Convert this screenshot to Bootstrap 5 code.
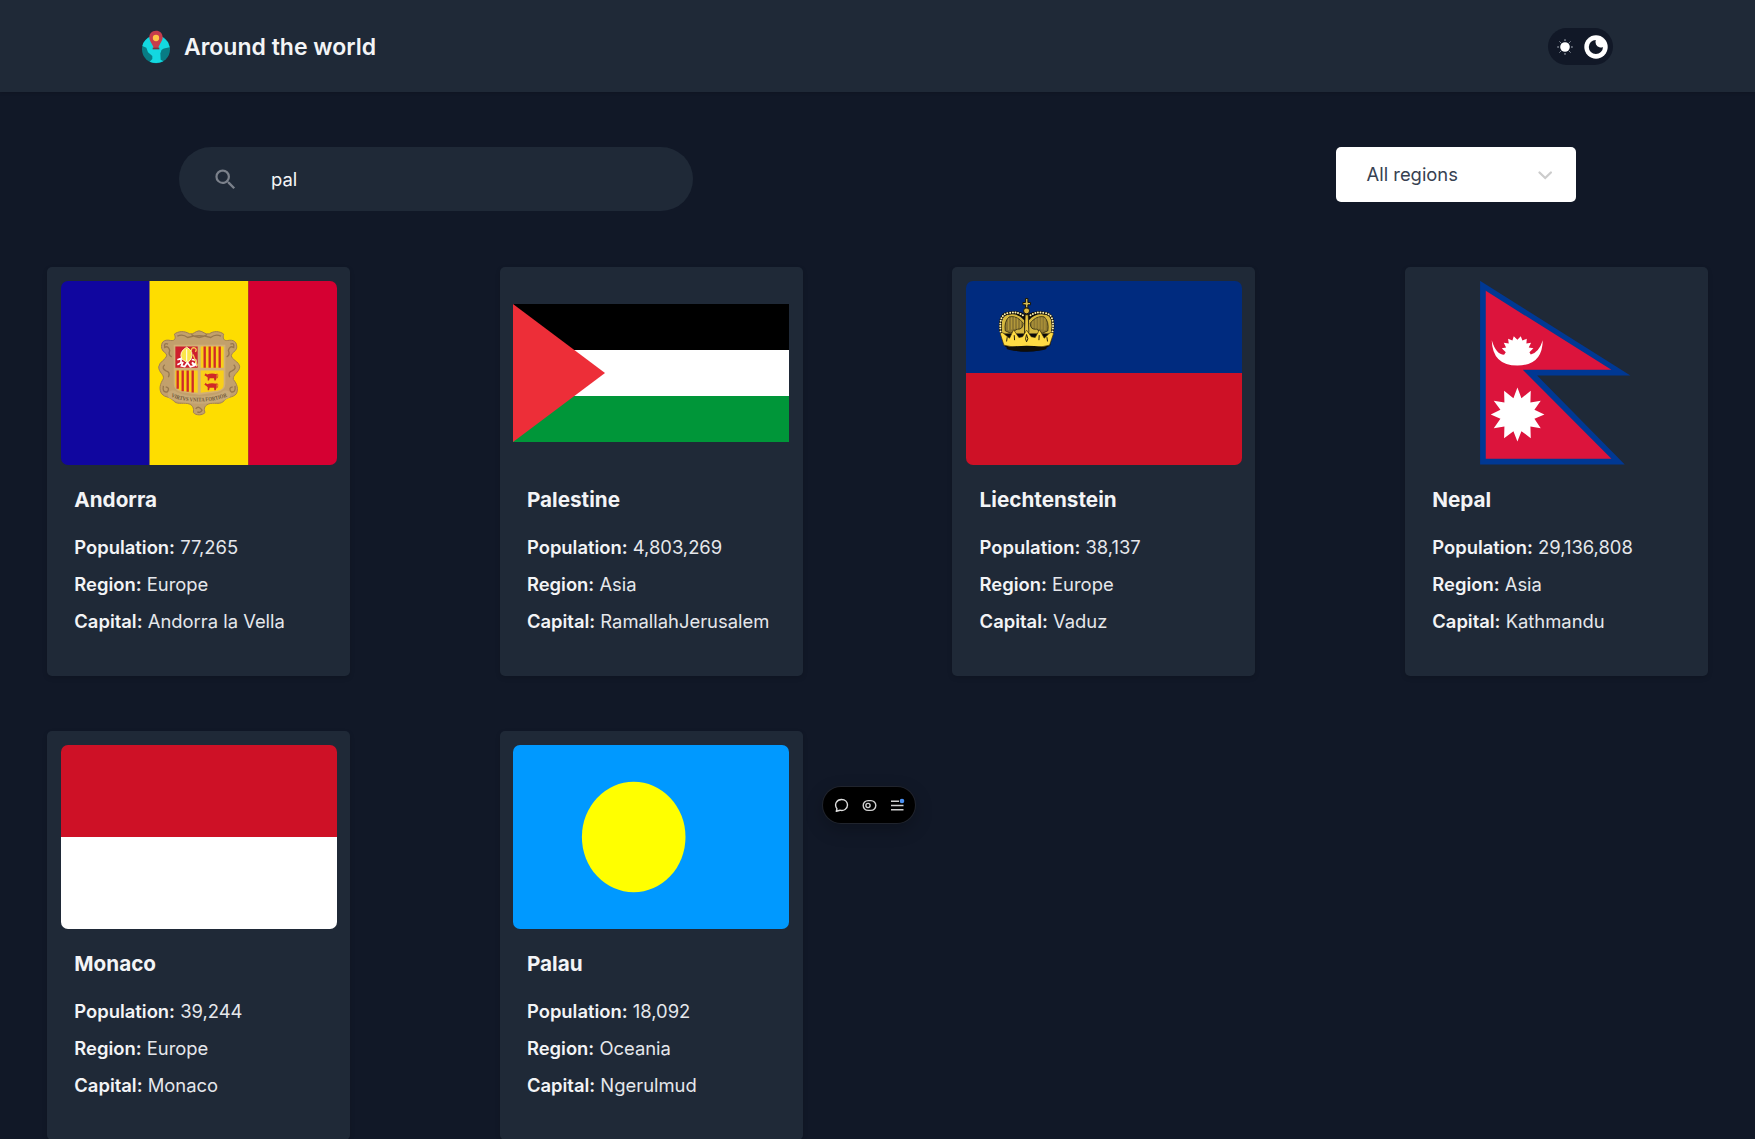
<!DOCTYPE html>
<html lang="en">
<head>
<meta charset="utf-8">
<meta name="viewport" content="width=device-width, initial-scale=1">
<title>Around the world</title>
<link href="https://cdn.jsdelivr.net/npm/bootstrap@5.3.0/dist/css/bootstrap.min.css" rel="stylesheet">
<style>
  body { background: #111827; color: #f3f4f6; font-family: Inter, sans-serif; font-size: 18.4px; height: 1139px; overflow: hidden; }
  svg { display: block; flex: none; }
  .topbar { height: 92px; padding: 1px 142px 0 141px; background: #1f2937; box-shadow: 0 1px 3px rgba(0,0,0,.15); }
  .site-title { font-size: 23px; font-weight: 600; line-height: 32px; margin-left: 13px; }
  .theme-switch { width: 65px; height: 37px; background: #111827; padding: 0 5px 0 8px; }
  .filters { padding: 55px 179px 0 179px; }
  .search-box { width: 514px; height: 64.4px; background: #1f2937; padding: 1px 0 0 33px; }
  .search-box input { background: transparent; border: 0; outline: 0; color: #f3f4f6; padding: 0; margin-left: 32px; width: 360px; font-size: 18.4px; }
  .region-select { width: 240px; height: 55px; border-radius: 5px; padding: 0 21px 0 30.5px; color: #374151; font-size: 18.4px; }
  .country-grid { display: grid; grid-template-columns: repeat(4, 303px); justify-content: space-between; row-gap: 55.4px; padding: 55.6px 47px 0; }
  .country { height: 408.8px; padding: 14px 13.5px; background: #1f2937; border-radius: 5px; box-shadow: 0 2px 5px rgba(0,0,0,.14); }
  .flag { width: 100%; height: 184px; }
  .flag-round { border-radius: 7px; }
  .country-info { padding: 19px 13.8px 0; }
  .country-info h2 { font-size: 20.7px; font-weight: 700; line-height: 32px; margin: 0 0 13px; }
  .country-info p { margin: 0; line-height: 36.8px; white-space: nowrap; color: #e5e7eb; }
  .country-info b { font-weight: 600; color: #f3f4f6; }
  .toolbar-pill { left: 823px; top: 787px; width: 91.500px; height: 36px; background: #000; box-shadow: 0 0 0 1px #20242d, 0 6px 18px rgba(0,0,0,.25); padding: 0 10px 0 11px; }
</style>
</head>
<body>
<header class="topbar d-flex align-items-center justify-content-between">
  <div class="d-flex align-items-center">
    <svg width="30" height="34" viewBox="0 0 90 102">
      <circle cx="45" cy="58" r="42" fill="#087c84"/>
      <path d="M13 31Q25 17 45 16Q67 17 81 37L86 52L72 55Q61 57 60 65L58 70L59 89L67 94Q47 104 26 95L34 87V78L21 67L16 53L4 48Q6 38 13 31Z" fill="#13d8e0"/>
      <path d="M45 2C32 2 25 11 25 22C25 34 35 43 38 54H52C55 42 65 34 65 22C65 10 57 2 45 2Z" fill="#c63c4c"/>
      <path d="M35 53H55V58H35Z" fill="#78333f"/>
      <circle cx="45" cy="24" r="9.5" fill="#ffc545"/>
    </svg>
    <span class="site-title">Around the world</span>
  </div>
  <div class="theme-switch rounded-pill d-flex align-items-center justify-content-between">
    <svg width="18" height="18" viewBox="-9 -9 18 18">
      <circle r="4.8" fill="#fff"/>
      <path d="M0-7.8V-6M0 6V7.8M-7.8 0H-6M6 0H7.8M-5.5-5.5L-4.3-4.3M4.3 4.3L5.5 5.5M-5.5 5.5L-4.3 4.3M4.3-4.3L5.5-5.5" stroke="#aeb5c0" stroke-width="1" fill="none"/>
    </svg>
    <svg width="24" height="24" viewBox="0 0 24 24">
      <circle cx="12" cy="12" r="11.7" fill="#fff"/>
      <path d="M11.8 4.9A7.1 7.1 0 1 0 19 12.1Q17.3 13 15.4 12.3Q13 11.500 12 9.500Q11 7 11.800 4.900Z" fill="#111827"/>
    </svg>
  </div>
</header>

<main>
  <div class="filters d-flex align-items-start justify-content-between">
    <div class="search-box rounded-pill d-flex align-items-center">
      <svg width="27" height="27" viewBox="0 0 24 24"><path fill="#7b818b" d="M15.500 14h-.79l-.28-.27A6.47 6.47 0 0 0 16 9.500 6.500 6.500 0 1 0 9.500 16c1.610 0 3.090-.590 4.230-1.570l.27.28v.79l5 4.990L20.490 19l-4.990-5zm-6 0C7.010 14 5 11.990 5 9.500S7.010 5 9.500 5 14 7.010 14 9.500 11.990 14 9.500 14z"/></svg>
      <input type="text" value="pal" aria-label="Search">
    </div>
    <div class="region-select bg-white d-flex align-items-center justify-content-between">
      <span>All regions</span>
      <svg width="20" height="20" viewBox="0 0 20 20"><path d="M4.500 7.500L10.200 13L15.900 7.500" fill="none" stroke="#ccc" stroke-width="2.300" stroke-linecap="round"/></svg>
    </div>
  </div>

  <div class="country-grid">
    <article class="country">
      <svg class="flag flag-round" viewBox="0 0 276 184" preserveAspectRatio="none">
        <path fill="#10069f" d="M0 0H89V184H0Z"/><path fill="#fedd00" d="M88.500 0H187.500V184H88.500Z"/><path fill="#d50032" d="M187.400 0H276V184H187.400Z"/>
        <g transform="translate(84.7 34.5) scale(.3333)">
          <path d="M160 46C148 47 145 57 132 55C115 45 97 47 86 56C92 69 87 77 75 75C53 70 45 82 48 99C52 112 64 111 63 121C61 132 41 138 39 154C39 172 56 176 53 190C43 205 39 221 48 235C58 247 70 242 82 254C93 269 109 261 125 264C142 267 145 278 143 291C151 301 171 300 178 291C173 278 177 268 194 264C211 261 224 269 236 255C246 242 260 248 272 235C279 220 274 205 263 192C260 177 281 171 282 154C280 137 257 133 257 120C258 110 270 109 273 98C275 80 264 71 246 75C234 77 230 68 234 56C222 46 203 46 191 55C177 58 173 47 160 46Z" fill="#c2a06c" stroke="#a08055" stroke-width="3"/>
          <path d="M95 62Q111 54 126 66Q160 55 195 66Q210 54 226 62M67 86Q54 80 57 96Q68 89 72 105Q67 119 78 124M254 86Q267 80 264 96Q252 89 248 105Q254 119 243 124M57 148Q46 158 61 166Q75 169 68 185M264 148Q275 158 259 166Q246 169 252 185M53 211Q49 233 65 229Q74 217 60 214M268 211Q271 233 256 229Q247 217 261 214M137 57Q160 75 184 57M150 280Q159 269 169 284Q164 294 155 289" fill="none" stroke="#97774d" stroke-width="4"/>
          <path d="M84 88H239V205Q239 225 213 230L161 238L108 230Q84 225 84 205Z" fill="#d2b077"/>
          <path d="M66 232Q81 218 94 230Q124 243 160 243Q197 243 227 230Q240 218 256 232L252 246Q225 260 195 262Q160 268 125 262Q93 260 68 246Z" fill="#c8a977"/>
          <path id="motto" d="M76 244Q115 260 160 258Q207 259 250 241" fill="none"/>
          <text font-size="17" font-family="Liberation Serif, serif" font-weight="700" fill="#6f583a"><textPath href="#motto" textLength="172" lengthAdjust="spacingAndGlyphs">VIRTVS VNITA FORTIOR</textPath></text>
          <path d="M89 93H156V157H89Z" fill="#ce1f2d"/>
          <path d="M165 93H234V157H165ZM89 165H156V232L109 226Q89 222 89 207ZM165 165H234V207Q234 223 214 226L165 232Z" fill="#f9cf19"/>
          <path d="M177 93V157M192 93V157M207 93V157M222 93V157M96 165V220M111 165V227M126 165V229M141 165V231" stroke="#cf2928" stroke-width="7"/>
          <path d="M108 130Q99 109 123 95Q146 108 136 130L126 142Z" fill="#fbe64b" stroke="#fff6c5" stroke-width="3"/>
          <path d="M123 101V137" stroke="#fff" stroke-width="3"/>
          <path d="M95 133L106 129L106 142L95 148M112 139L107 151L117 153L125 141L134 154L145 151L139 141L151 149L150 134L138 132" fill="none" stroke="#fff" stroke-width="5"/>
          <path d="M137 108Q136 95 147 97Q155 101 149 109M142 117L155 151" fill="none" stroke="#f6ca53" stroke-width="4"/>
          <g id="cow" fill="#cf2928"><path d="M180 173L184 177Q197 172 213 176V187L210 195H206L205 188H192L190 195H186V186L181 182L176 179Z"/><path d="M211 177Q219 171 215 188" fill="none" stroke="#cf2928" stroke-width="2"/></g>
          <use href="#cow" y="29"/>
        </g>
      </svg>
      <div class="country-info"><h2>Andorra</h2><p><b>Population:</b> 77,265</p><p><b>Region:</b> Europe</p><p><b>Capital:</b> Andorra la Vella</p></div>
    </article>

    <article class="country">
      <svg class="flag" viewBox="0 0 276 184">
        <path d="M0 23H276V69H0Z"/><path fill="#fff" d="M0 69H276V115H0Z"/><path fill="#009639" d="M0 115H276V161H0Z"/><path fill="#ed2e38" d="M0 23L92 92L0 161Z"/>
      </svg>
      <div class="country-info"><h2>Palestine</h2><p><b>Population:</b> 4,803,269</p><p><b>Region:</b> Asia</p><p><b>Capital:</b> RamallahJerusalem</p></div>
    </article>

    <article class="country">
      <svg class="flag flag-round" viewBox="0 0 276 184">
        <path fill="#002b7f" d="M0 0H276V92H0Z"/><path fill="#ce1126" d="M0 92H276V184H0Z"/>
        <g transform="translate(13.9 -5.5) scale(.3333)">
          <path d="M60 168Q55 116 82 111Q112 103 140 117Q169 103 199 111Q226 117 221 168L211 210Q185 229 140 229Q94 229 72 210Z" fill="#0b0b0b"/>
          <path d="M67 174Q57 123 84 118Q114 111 133 134V174ZM147 174V134Q168 111 198 118Q223 124 214 174Z" fill="#d6b83f"/>
          <path d="M76 166Q72 137 88 124Q112 119 130 143Q129 163 112 161L92 173ZM151 143Q169 119 193 124Q208 138 204 166L188 173L170 161Q151 164 151 143Z" fill="#8e7932" stroke="#17150a" stroke-width="2"/>
          <path d="M86 128V164M95 125V162M104 125V160M113 129V160M122 136V157M159 136V157M168 129V160M177 125V160M186 125V162M195 128V164" stroke="#c9ac40" stroke-width="2"/>
          <path d="M62 168Q56 117 84 113Q115 106 134 123M218 168Q225 117 197 113Q166 106 147 123" fill="none" stroke="#12110a" stroke-width="8"/>
          <path d="M62 168Q56 117 84 113Q115 106 134 123M218 168Q225 117 197 113Q166 106 147 123" fill="none" stroke="#fff3b3" stroke-width="6" stroke-dasharray="0 8" stroke-linecap="round"/>
          <path d="M136 118H145L147 171H134Z" fill="#e6c340" stroke="#18150a" stroke-width="2"/>
          <circle cx="140" cy="106" r="9" fill="#ddb83d" stroke="#18150a" stroke-width="3"/>
          <path d="M137 97V88H129V81H137V69H144V81H152V88H144V97Z" fill="#d8bd53" stroke="#17150a" stroke-width="3"/>
          <path d="M72 209L61 174Q68 167 77 179L89 188L101 163L117 186L128 184L140 164L154 184L166 186L179 163L193 188L204 178Q213 166 221 174L209 209Q174 219 140 218Q106 218 72 209Z" fill="#ffdc44" stroke="#40320d" stroke-width="2"/>
          <path d="M82 185L80 198M103 179L104 194M140 177L137 190L140 199L144 190ZM178 179L177 194M201 185L203 198" stroke="#2a210a" stroke-width="3" fill="none"/>
          <ellipse cx="140" cy="219" rx="60" ry="8" fill="#100e08"/>
        </g>
      </svg>
      <div class="country-info"><h2>Liechtenstein</h2><p><b>Population:</b> 38,137</p><p><b>Region:</b> Europe</p><p><b>Capital:</b> Vaduz</p></div>
    </article>

    <article class="country">
      <svg class="flag" viewBox="0 0 276 184">
        <g transform="translate(-18.9 -20.5) scale(.3333)">
          <path fill="#003893" d="M243 61L694 345H414L677 612H243Z"/>
          <path fill="#dc143c" d="M260 91L637 328H371L637 595H260Z"/>
          <path fill="#fff" d="M278 239Q291 282 315 283L320 275L308 263L321 261L314 247L329 249L327 235L340 240L344 227L355 238L365 227L370 240L383 235L382 249L396 247L389 261L403 263L391 275L395 282Q420 275 431 239Q430 315 355 315Q280 315 278 239Z"/>
          <path fill="#fff" d="M355 381L367 413L395 391L394 426L425 421L406 448L436 462L406 475L425 503L394 498L395 533L367 512L355 543L343 512L315 533L316 498L284 503L304 475L275 462L304 448L284 421L316 426L315 391L343 413Z"/>
        </g>
      </svg>
      <div class="country-info"><h2>Nepal</h2><p><b>Population:</b> 29,136,808</p><p><b>Region:</b> Asia</p><p><b>Capital:</b> Kathmandu</p></div>
    </article>

    <article class="country">
      <svg class="flag flag-round" viewBox="0 0 276 184" preserveAspectRatio="none"><path fill="#ce1126" d="M0 0H276V93H0Z"/><path fill="#fff" d="M0 92H276V184H0Z"/></svg>
      <div class="country-info"><h2>Monaco</h2><p><b>Population:</b> 39,244</p><p><b>Region:</b> Europe</p><p><b>Capital:</b> Monaco</p></div>
    </article>

    <article class="country">
      <svg class="flag flag-round" viewBox="0 0 276 184" preserveAspectRatio="none"><path fill="#0099ff" d="M0 0H276V184H0Z"/><ellipse cx="120.700" cy="92" rx="51.800" ry="55.300" fill="#ff0"/></svg>
      <div class="country-info"><h2>Palau</h2><p><b>Population:</b> 18,092</p><p><b>Region:</b> Oceania</p><p><b>Capital:</b> Ngerulmud</p></div>
    </article>
  </div>
</main>

<div class="toolbar-pill position-absolute rounded-pill d-flex align-items-center justify-content-between">
  <svg width="15" height="15" viewBox="0 0 15 15" fill="none" stroke="#dedede" stroke-width="1.400"><path d="M2.300 13.200L3 10.800C-.2 6.500 2.600 1.500 7.600 1.500C11.300 1.500 13.500 4 13.500 7C13.500 11 9.500 13.200 6 12.200Z" stroke-linejoin="round"/></svg>
  <svg width="15" height="15" viewBox="0 0 15 15" fill="none" stroke="#d0d0d0" stroke-width="1.400"><rect x="1.200" y="2.600" width="12.600" height="9.800" rx="4.900"/><circle cx="6" cy="7.500" r="2.100"/></svg>
  <svg width="15" height="15" viewBox="0 0 15 15" fill="none" stroke="#d0d0d0" stroke-width="1.400"><path d="M1 3.200H9M1 7.500H13.500M1 11.800H13.500"/><circle cx="12" cy="3" r="2.300" fill="#4b91f2" stroke="none"/></svg>
</div>
<script src="https://cdn.jsdelivr.net/npm/bootstrap@5.3.0/dist/js/bootstrap.bundle.min.js"></script>
</body>
</html>
